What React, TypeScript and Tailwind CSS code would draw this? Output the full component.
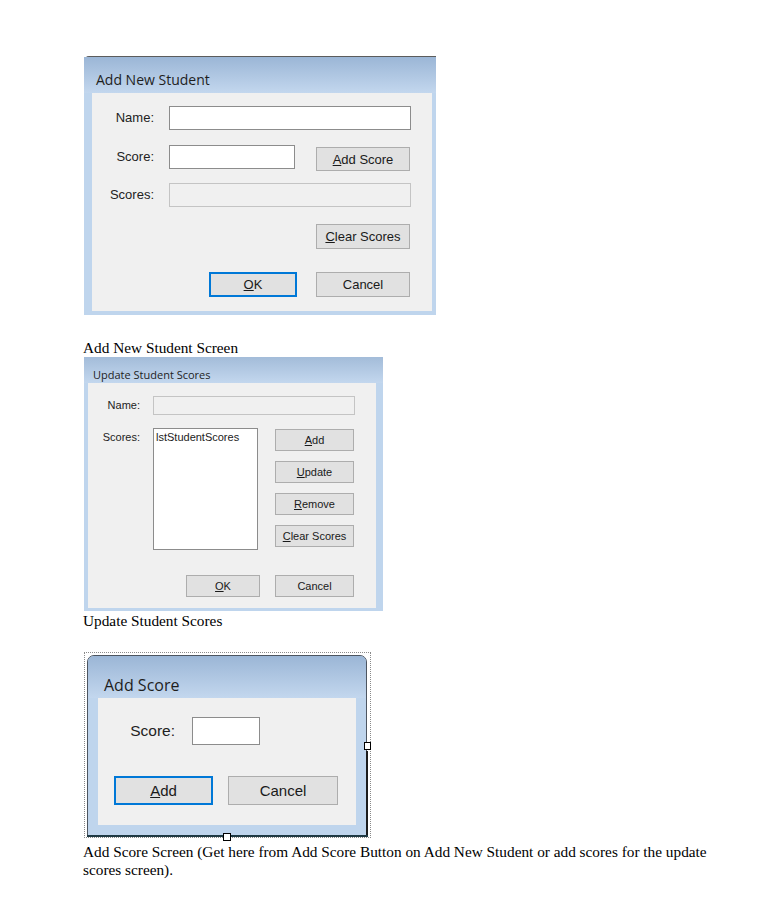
import React from 'react';

const sans = { fontFamily: '"Liberation Sans", Arial, sans-serif' };
const title = { fontFamily: '"Open Sans", "Noto Sans", sans-serif' };

const Btn: React.FC<{ w: string; h: string; text: string; hot?: number; focus?: boolean; size: string }> = ({
  w,
  h,
  text,
  hot,
  focus,
  size,
}) => {
  const label =
    hot === undefined ? (
      text
    ) : (
      <>
        {text.slice(0, hot)}
        <u>{text[hot]}</u>
        {text.slice(hot + 1)}
      </>
    );
  return (
    <div
      className={`${w} ${h} ${size} flex items-center justify-center bg-[#e1e1e1] text-[#1a1a1a] ${
        focus ? 'border-2 border-[#0078d7]' : 'border border-[#adadad]'
      }`}
      style={sans}
    >
      <span className="leading-none">{label}</span>
    </div>
  );
};

const AddNewStudent: React.FC = () => (
  <div className="ml-px w-[352px] flex flex-col bg-[#bfd5ed] border-t border-[#5c5c5c] rounded-tl-[5px]">
    <div className="h-[36px] pt-[10px] pl-[12px] flex items-center bg-gradient-to-b from-[#9bb6d6] to-[#c3d7ee]">
      <span className="text-[14px] text-[#1e1e1e] leading-[26px]" style={title}>
        Add New Student
      </span>
    </div>
    <div className="pl-[8px] pr-[4px] pb-[4px]">
      <div className="bg-[#f0f0f0] pt-[13px] pb-[14px] flex flex-col text-[13px] text-[#222]" style={sans}>
        <div className="flex items-center h-[24px]">
          <span className="w-[62px] text-right">Name:</span>
          <div className="ml-[15px] w-[242px] h-[24px] bg-white border border-[#8c8c8c]" />
        </div>
        <div className="mt-[15px] flex items-start h-[26px]">
          <span className="w-[62px] text-right leading-[24px]">Score:</span>
          <div className="ml-[15px] w-[126px] h-[24px] bg-white border border-[#8c8c8c]" />
          <div className="ml-[21px] mt-[2px]">
            <Btn w="w-[94px]" h="h-[24px]" size="text-[13px]" text="Add Score" hot={0} />
          </div>
        </div>
        <div className="mt-[12px] flex items-center h-[24px]">
          <span className="w-[62px] text-right">Scores:</span>
          <div className="ml-[15px] w-[242px] h-[24px] bg-[#f0f0f0] border border-[#c4c4c4]" />
        </div>
        <div className="mt-[17px] pl-[224px]">
          <Btn w="w-[94px]" h="h-[25px]" size="text-[13px]" text="Clear Scores" hot={0} />
        </div>
        <div className="mt-[23px] pl-[117px] flex gap-[19px]">
          <Btn w="w-[88px]" h="h-[25px]" size="text-[13px]" text="OK" hot={0} focus />
          <Btn w="w-[94px]" h="h-[25px]" size="text-[13px]" text="Cancel" />
        </div>
      </div>
    </div>
  </div>
);

const UpdateScores: React.FC = () => (
  <div className="ml-px w-[299px] flex flex-col bg-[#bfd5ed]">
    <div className="h-[26px] pt-[10px] pl-[9px] flex items-center bg-gradient-to-b from-[#a3bcd9] to-[#c3d7ee]">
      <span className="text-[11px] text-[#1e1e1e] leading-[16px]" style={title}>
        Update Student Scores
      </span>
    </div>
    <div className="pl-[4px] pr-[7px] pb-[3px]">
      <div className="bg-[#f0f0f0] pt-[13px] pb-[11px] flex flex-col text-[11px] text-[#222]" style={sans}>
        <div className="flex items-center h-[19px]">
          <span className="w-[52px] text-right">Name:</span>
          <div className="ml-[13px] w-[202px] h-[19px] bg-[#f0f0f0] border border-[#c4c4c4]" />
        </div>
        <div className="mt-[13px] flex items-start">
          <span className="w-[52px] text-right leading-[18px]">Scores:</span>
          <div className="ml-[13px] w-[105px] h-[122px] bg-white border border-[#8c8c8c] pl-[2px] leading-[16px]">
            lstStudentScores
          </div>
          <div className="ml-[17px] mt-px flex flex-col gap-[10px]">
            <Btn w="w-[79px]" h="h-[22px]" size="text-[11px]" text="Add" hot={0} />
            <Btn w="w-[79px]" h="h-[22px]" size="text-[11px]" text="Update" hot={0} />
            <Btn w="w-[79px]" h="h-[22px]" size="text-[11px]" text="Remove" hot={0} />
            <Btn w="w-[79px]" h="h-[22px]" size="text-[11px]" text="Clear Scores" hot={0} />
          </div>
        </div>
        <div className="mt-[25px] pl-[98px] flex gap-[15px]">
          <Btn w="w-[74px]" h="h-[22px]" size="text-[11px]" text="OK" hot={0} />
          <Btn w="w-[79px]" h="h-[22px]" size="text-[11px]" text="Cancel" />
        </div>
      </div>
    </div>
  </div>
);

const AddScore: React.FC = () => (
  <div className="relative ml-px w-[287px] border border-dotted border-[#8a8a8a] pt-[2px] pl-[2px] pr-[3px] pb-px">
    <div className="flex flex-col bg-[#bfd5ed] border border-[#4d5560] rounded-t-[7px] overflow-hidden">
      <div className="h-[42px] pt-[16px] pl-[16px] flex items-center bg-gradient-to-b from-[#9bb6d6] to-[#c3d7ee]">
        <span className="text-[16px] text-[#1e1e1e] leading-[22px]" style={title}>
          Add Score
        </span>
      </div>
      <div className="pl-[10px] pr-[10px] pb-[10px]">
        <div className="bg-[#f0f0f0] pt-[19px] pb-[20px] flex flex-col text-[15.5px] text-[#222]" style={sans}>
          <div className="flex items-center h-[28px]">
            <span className="w-[77px] text-right">Score:</span>
            <div className="ml-[17px] w-[68px] h-[28px] bg-white border border-[#8c8c8c]" />
          </div>
          <div className="mt-[31px] pl-[16px] flex gap-[15px]">
            <Btn w="w-[99px]" h="h-[29px]" size="text-[15px]" text="Add" hot={0} focus />
            <Btn w="w-[110px]" h="h-[29px]" size="text-[15px]" text="Cancel" />
          </div>
        </div>
      </div>
    </div>
    <div className="absolute left-[281px] top-[98px] w-[2px] h-[86px] bg-[#1c1c1c]" />
    <div className="absolute left-[2px] top-[182px] w-[281px] h-[2px] bg-[#1f3a44]" />
    <div className="absolute left-[279px] top-[89px] w-[7px] h-[8px] bg-white border border-black" />
    <div className="absolute left-[138px] top-[180px] w-[8px] h-[8px] bg-white border border-black" />
  </div>
);

export default function App() {
  return (
    <div
      className="min-h-[923px] bg-white pl-[83px] pt-[56px] text-black"
      style={{ fontFamily: '"Liberation Serif", "Times New Roman", serif' }}
    >
      <div className="flex flex-col items-start">
        <AddNewStudent />
        <p className="mt-[24px] text-[15.3px] leading-[18px]">Add New Student Screen</p>
        <UpdateScores />
        <p className="mt-px text-[15.3px] leading-[18px]">Update Student Scores</p>
        <div className="mt-[22px]">
          <AddScore />
        </div>
        <p className="mt-[5px] w-[645px] text-[15.3px] leading-[18px]">
          Add Score Screen (Get here from Add Score Button on Add New Student or add scores for the update scores
          screen).
        </p>
      </div>
    </div>
  );
}
